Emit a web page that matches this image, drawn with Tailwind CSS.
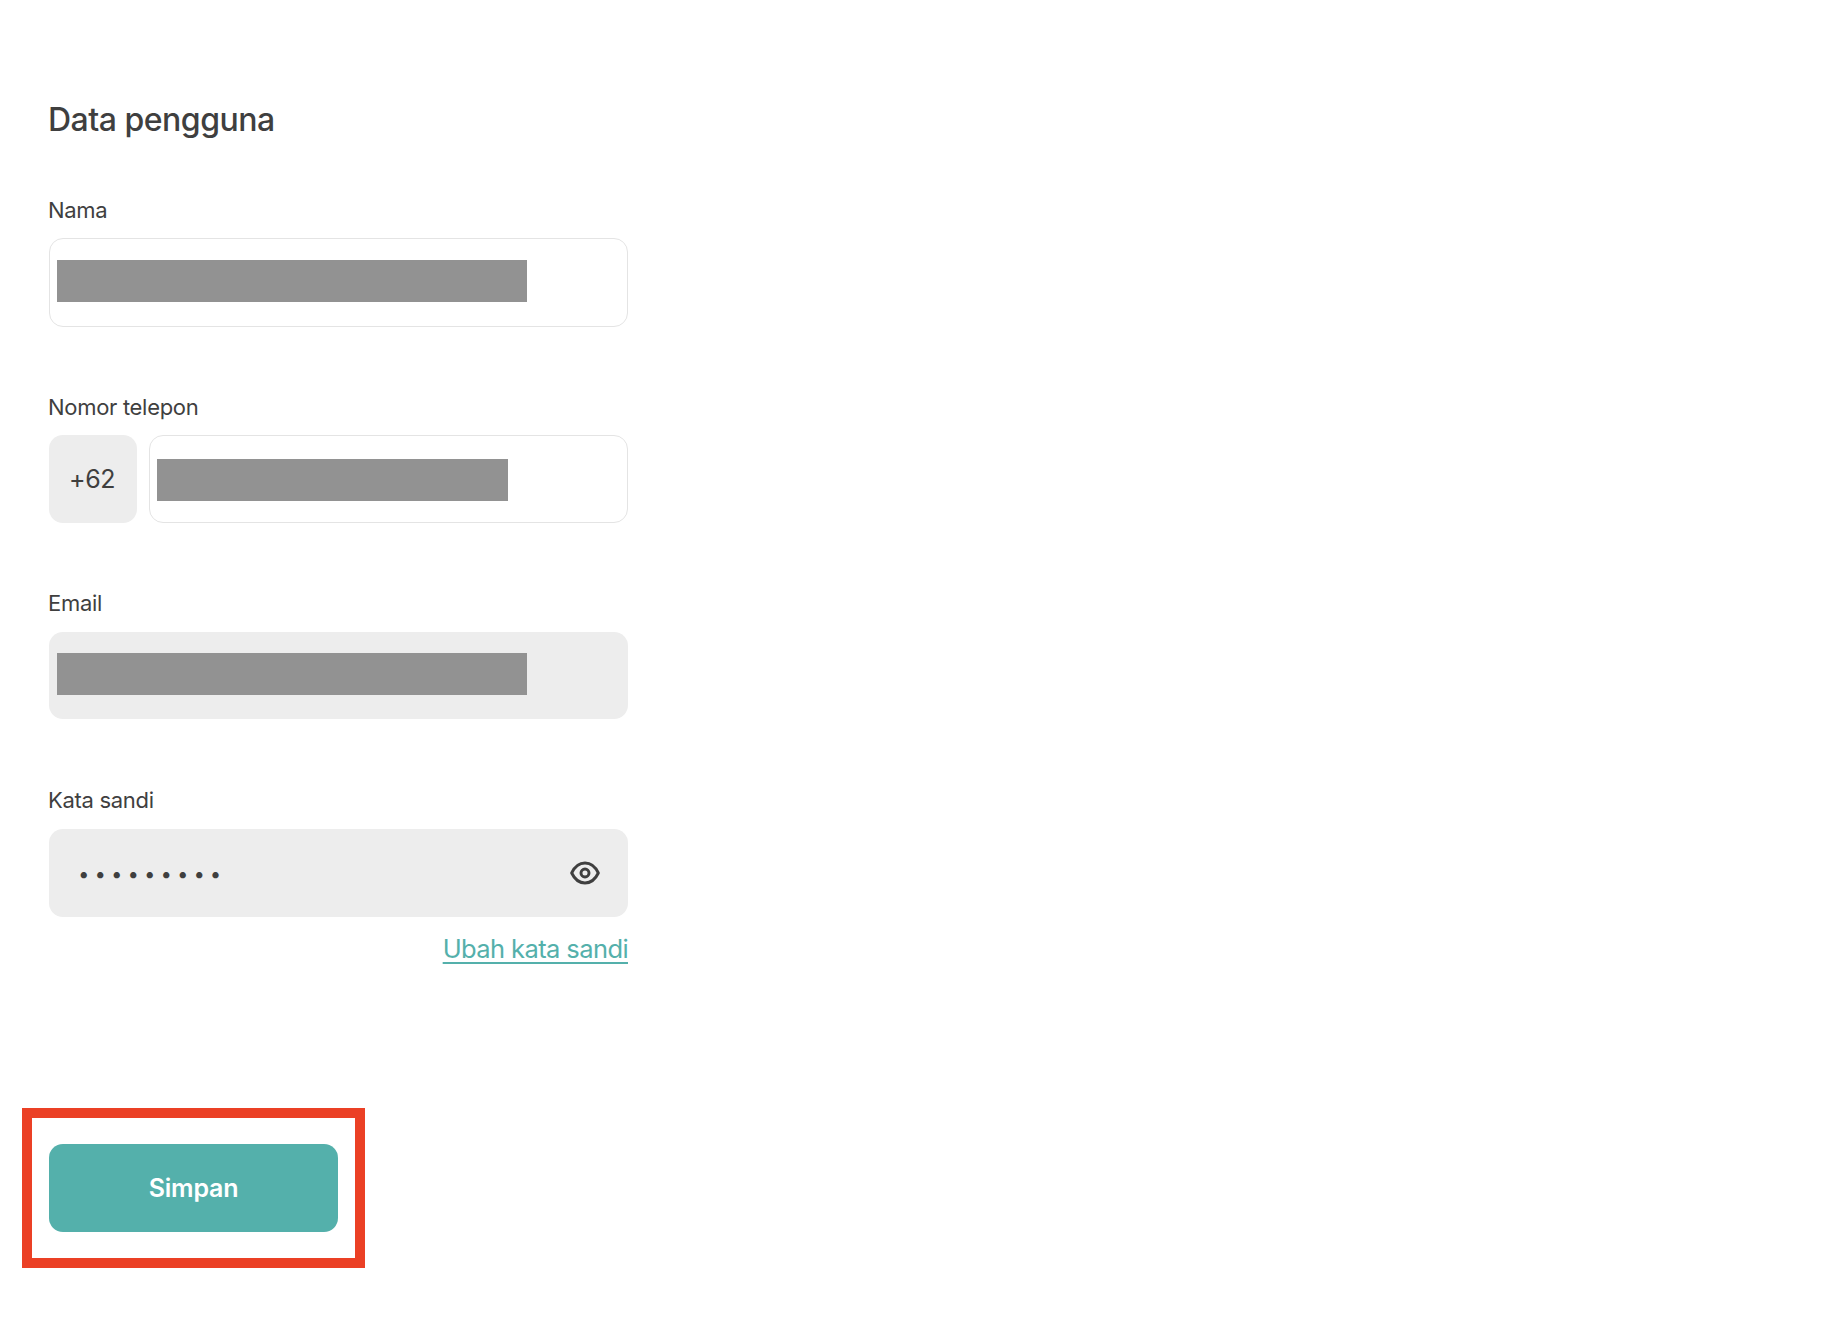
<!DOCTYPE html>
<html lang="en">
<head>
  <meta charset="UTF-8" />
  <meta name="viewport" content="width=device-width, initial-scale=1.0" />
  <title>Data pengguna</title>
  <script src="https://cdn.jsdelivr.net/npm/@tailwindcss/browser@4"></script>
</head>
<body class="bg-white min-h-screen font-['Inter',sans-serif] text-[#3f3f3f]">
  <main class="pt-[100px] pl-[49px] w-[628px] flex flex-col">
    <h2 class="h-[40px] flex items-center text-[32px] font-medium tracking-[-0.5px] ml-[-1px]">Data pengguna</h2>

    <label class="mt-[56px] mb-[14px] h-[28px] flex items-center text-[22px] tracking-[-0.3px] ml-[-1px]">Nama</label>
    <div class="h-[89px] flex items-center rounded-[14px] border border-[#e4e4e4] pl-[7px] pb-[4px]">
      <div class="w-[470px] h-[42px] bg-[#929292]"></div>
    </div>

    <label class="mt-[66px] mb-[14px] h-[28px] flex items-center text-[22px] tracking-[-0.3px] ml-[-1px]">Nomor telepon</label>
    <div class="flex gap-3 h-[88px]">
      <div class="w-[88px] flex items-center justify-center rounded-[14px] bg-[#ededed] text-[25px] tracking-[-0.5px] pt-[2px] pr-[2px]">+62</div>
      <div class="flex-1 flex items-center rounded-[14px] border border-[#e4e4e4] pl-[7px] pt-[2px]">
        <div class="w-[351px] h-[42px] bg-[#929292]"></div>
      </div>
    </div>

    <label class="mt-[66px] mb-[15px] h-[28px] flex items-center text-[22px] tracking-[-0.3px] ml-[-1px]">Email</label>
    <div class="h-[87px] flex items-center rounded-[14px] bg-[#ededed] pl-[8px] pb-[3px]">
      <div class="w-[470px] h-[42px] bg-[#929292]"></div>
    </div>

    <label class="mt-[67px] mb-[15px] h-[28px] flex items-center text-[22px] tracking-[-0.3px] ml-[-1px]">Kata sandi</label>
    <div class="h-[88px] flex items-center justify-between rounded-[14px] bg-[#ededed] pl-[30px] pr-[27px]">
      <span class="text-[20px] font-bold tracking-[7px] leading-none pt-[2px]">•••••••••</span>
      <svg class="w-[32px] h-[32px]" viewBox="0 0 24 24" fill="none" stroke="#3f3f3f" stroke-width="2.2" stroke-linecap="round" stroke-linejoin="round">
        <path d="M2 12c2.200-4.600 5.600-7.500 10-7.500s7.800 2.900 10 7.500c-2.200 4.600-5.600 7.500-10 7.500s-7.800-2.900-10-7.500z" />
        <circle cx="12" cy="12" r="3" />
      </svg>
    </div>
    <a href="#" class="mt-[18px] h-[28px] self-end text-[25.500px] leading-[28px] tracking-[-0.6px] text-[#54b0ab] underline decoration-2 underline-offset-[4px]">Ubah kata sandi</a>

    <div class="mt-[145px] ml-[-27px] w-[343px] border-[10px] border-[#eb4025] pl-[17px] pr-[17px] py-[26px]">
      <button class="w-full h-[88px] rounded-[14px] bg-[#54b0ab] text-white text-[25px] font-semibold tracking-[-0.2px] pt-[2px]">Simpan</button>
    </div>
  </main>
</body>
</html>
